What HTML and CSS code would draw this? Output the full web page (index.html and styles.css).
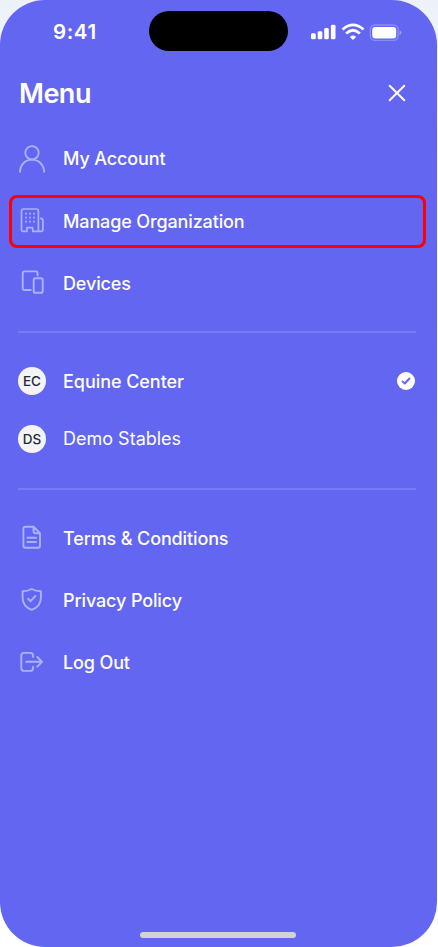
FILE: index.html
```html
<!DOCTYPE html>
<html lang="en">
<head>
<meta charset="utf-8">
<title>Menu</title>
<link rel="stylesheet" href="styles.css">
</head>
<body>
<main class="phone">
  <div class="status">
    <span class="time">9:41</span>
    <span class="island"></span>
    <svg class="signals" width="92" height="20" viewBox="0 0 92 20">
      <g fill="#fff">
        <rect x="1" y="11.3" width="4.8" height="6" rx="1.4"/>
        <rect x="7.7" y="9.2" width="4.6" height="8.1" rx="1.4"/>
        <rect x="14.2" y="6" width="4.6" height="11.3" rx="1.4"/>
        <rect x="20.9" y="2.8" width="4.6" height="14.5" rx="1.4"/>
        <path d="M43 18 L39.9 14.9 Q43 12.3 46.1 14.9 Z"/>
        <rect x="62.2" y="5" width="24" height="11.4" rx="3"/>
      </g>
      <g fill="none" stroke="#fff" stroke-width="2.7">
        <path d="M32.5 7.4 Q43 -1.7 53.5 7.4"/>
        <path d="M36.1 11.4 Q43 5.1 49.9 11.4"/>
      </g>
      <rect x="60.3" y="3" width="27.8" height="15.4" rx="4.6" fill="none" stroke="#fff" stroke-opacity=".25" stroke-width="1.4"/>
      <path d="M89.6 8.2 Q93 10.7 89.6 13.2Z" fill="#fff" fill-opacity=".4"/>
    </svg>
  </div>
  <header class="header">
    <h1>Menu</h1>
    <svg class="close" width="20" height="20" viewBox="0 0 20 20"><path d="M2.7 2.7 17.3 17.3M17.3 2.7 2.7 17.3"/></svg>
  </header>
  <nav class="list">
    <a class="row"><svg class="icon" viewBox="0 0 28 28"><circle cx="14" cy="7.8" r="6.7"/><path d="M2 26.8C2.3 19.5 7.3 14.6 14 14.6S25.7 19.5 26.2 26.8"/></svg><span class="label">My Account</span></a>
    <a class="row current"><svg class="icon thin" viewBox="0 0 28 28"><path d="M5.3 2H18.5Q20.4 2 20.4 4V24.3H14.7V20.6H8.9V24.3H5.3Q3.5 24.3 3.5 22.4V4Q3.5 2 5.3 2ZM20.4 24.3H23Q24.9 24.3 24.9 22.4V13.5Q24.9 11.5 22.7 11.3"/><path class="dots" d="M7.1 6.6h1.8M11.1 6.6h1.8M15.1 6.6h1.8M7.1 10.6h1.8M11.1 10.6h1.8M15.1 10.6h1.8M7.1 14.6h1.8M11.1 14.6h1.8M15.1 14.6h1.8"/></svg><span class="label low">Manage Organization</span></a>
    <a class="row"><svg class="icon" viewBox="0 0 28 28"><path d="M19.6 6.6V4.2Q19.6 2.4 17.8 2.4H6.5Q4.7 2.4 4.7 4.2V19.2Q4.7 21 6.5 21H12.7"/><rect x="15.7" y="9.2" width="9" height="14.6" rx="1.9"/></svg><span class="label low">Devices</span></a>
  </nav>
  <hr>
  <nav class="list orgs">
    <a class="row"><span class="avatar">EC</span><span class="label low equine">Equine Center</span><svg class="check" width="20" height="20" viewBox="0 0 20 20"><circle cx="10" cy="10" r="9" fill="#fff"/><path d="M6.5 10.4 8.8 12.5 13.4 7.5" fill="none" stroke="#6366f1" stroke-width="1.9" stroke-linecap="round" stroke-linejoin="round"/></svg></a>
    <a class="row"><span class="avatar">DS</span><span class="demo">Demo Stables</span></a>
  </nav>
  <hr>
  <nav class="list">
    <a class="row"><svg class="icon" viewBox="0 0 28 28"><path d="M15.5 2.8H7.4Q5.4 2.8 5.4 4.8V21.8Q5.4 23.8 7.4 23.8H20Q22 23.8 22 21.8V9.2ZM15.5 2.8V7.2Q15.5 9.2 17.5 9.2H22M9.4 13.8H18M9.4 18H18"/></svg><span class="label low">Terms &amp; Conditions</span></a>
    <a class="row"><svg class="icon" viewBox="0 0 28 28"><path d="M13.7 3C11.2 4.4 7.5 5.3 4.6 5.3V11.8C4.6 18.2 8.5 21.9 13.7 23.9C18.9 21.9 22.9 18.2 22.9 11.8V5.3C19.9 5.3 16.2 4.4 13.7 3ZM10.1 12.8 12.6 15.2 17.4 10"/></svg><span class="label low">Privacy Policy</span></a>
    <a class="row"><svg class="icon" viewBox="0 0 28 28"><path d="M15 9V7.6Q15 4.9 12.3 4.9H6Q3.3 4.9 3.3 7.6V20.2Q3.3 22.9 6 22.9H12.3Q15 22.9 15 20.2V18.8M8.2 13.8H24M19.3 9 24.1 13.8 19.3 18.6"/></svg><span class="label low">Log Out</span></a>
  </nav>
  <div class="home"></div>
</main>
</body>
</html>
```
FILE: styles.css
```css
*, *::after { box-sizing: border-box; }
body {
  margin: 0;
  height: 947px;
  overflow: hidden;
  background: linear-gradient(#edf2f9 0, #f5f8fc 200px, #fff 450px);
  font-family: Inter, sans-serif;
  color: #fff;
}
.phone {
  width: 436.5px;
  height: 946.5px;
  border-radius: 45px;
  background: #6366f1;
  display: flex;
  flex-direction: column;
}
.status {
  height: 62px;
  display: grid;
  grid-template-columns: 149px 139px 1fr;
  align-items: center;
}
.time {
  padding: 2px 0 0 53px;
  font-size: 20.5px;
  font-weight: 600;
  line-height: 24px;
  letter-spacing: 0.6px;
}
.island { height: 40px; border-radius: 20px; background: #000; }
.signals { margin-left: 22px; margin-top: 2px; }
.header {
  height: 66px;
  padding: 0 30px 0 19px;
  display: flex;
  align-items: center;
  justify-content: space-between;
}
h1 {
  margin: -2px 0 0;
  font-size: 27px;
  font-weight: 600;
  line-height: 34px;
  letter-spacing: -0.5px;
}
.close { margin-top: -4px; fill: none; stroke: #fff; stroke-width: 2; stroke-linecap: round; }
.list { padding: 0 21px 0 18px; }
.row {
  position: relative;
  height: 62.2px;
  display: flex;
  align-items: center;
  gap: 17px;
  font-size: 18px;
  font-weight: 500;
  line-height: 22px;
  white-space: nowrap;
}
.label { margin-top: -1px; letter-spacing: -0.13px; }
.low { margin-top: 1.4px; }
.equine { letter-spacing: -0.05px; }
.icon {
  width: 28px;
  height: 28px;
  flex: none;
  fill: none;
  stroke: #a5b4fc;
  stroke-width: 1.9;
  stroke-linecap: round;
  stroke-linejoin: round;
}
.thin { stroke-width: 1.7; }
.dots { stroke-width: 1.8; stroke-linecap: butt; }
.current::after {
  content: "";
  position: absolute;
  left: -9px;
  right: -10px;
  top: 5px;
  height: 53px;
  border: 3px solid #f00;
  border-radius: 8px;
}
hr {
  width: 398px;
  height: 2px;
  margin: 16.4px 0 0 18px;
  border: 0;
  background: #787bf6;
}
.orgs { padding-top: 19px; }
.orgs .row { height: 58px; }
.avatar {
  width: 28px;
  height: 28px;
  flex: none;
  border-radius: 50%;
  background: #f3f4f6;
  color: #1f2937;
  font-size: 13.5px;
  display: grid;
  place-items: center;
}
.demo { font-weight: 400; }
.check { margin-left: auto; }
.orgs + hr { margin-top: 19.6px; }
hr + .list:not(.orgs) { padding-top: 17.3px; }
.home {
  width: 156px;
  height: 6px;
  margin: auto auto 8.5px 140px;
  border-radius: 3px;
  background: #d1d1d6;
}
```
